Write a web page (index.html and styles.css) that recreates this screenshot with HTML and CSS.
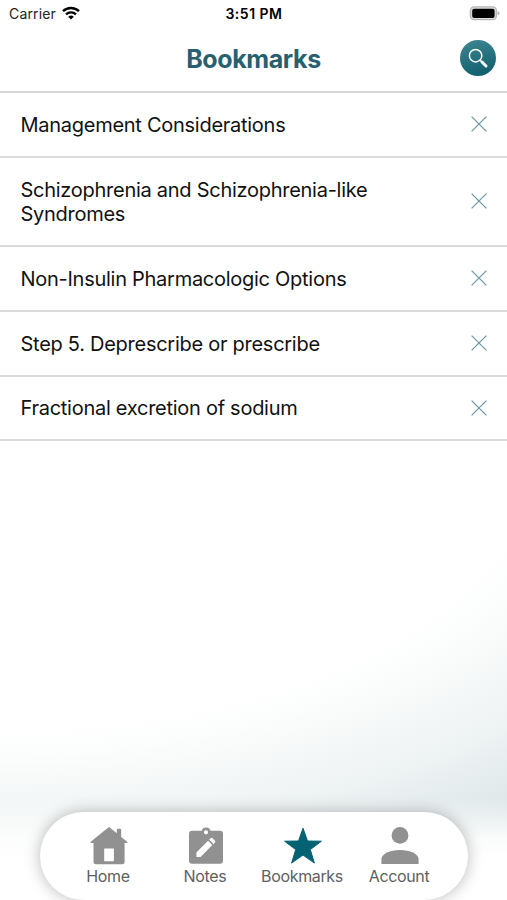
FILE: index.html
```html
<!DOCTYPE html>
<html lang="en">
<head>
    <title>Bookmarks</title>
    <meta charset="UTF-8">
    <link rel="stylesheet" href="styles.css">
</head>
<body>
    <div class="screen">
        <!-- status bar -->
        <div class="status-bar">
            <div class="carrier">
                <span>Carrier</span>
                <svg class="wifi" viewBox="0 0 18 14" width="18" height="14">
                    <path d="M1 5.2a11.6 11.6 0 0 1 16 0" fill="none" stroke="#000" stroke-width="2.5"/>
                    <path d="M4 8.4a7.2 7.2 0 0 1 10 0" fill="none" stroke="#000" stroke-width="2.3"/>
                    <path d="M6.2 10.8a4 4 0 0 1 5.6 0L9 13.6z"/>
                </svg>
            </div>
            <div class="time">3:51 PM</div>
            <div class="battery">
                <svg viewBox="0 0 31 15" width="31" height="15">
                    <rect x="1.4" y=".9" width="26" height="12.8" rx="3.8" fill="#ddd" stroke="#b5b5b5" stroke-width="1.3"/>
                    <rect x="3.2" y="2.7" width="22.4" height="9.2" rx="2"/>
                    <path d="M28.6 5v4.6q2-.6 2-2.3T28.6 5z" fill="#b5b5b5"/>
                </svg>
            </div>
        </div>

        <header class="header">
            <h1>Bookmarks</h1>
            <button class="search-btn" aria-label="Search">
                <svg viewBox="0 0 36 36" width="36" height="36">
                    <circle cx="15.6" cy="15.7" r="6.2" fill="none" stroke="#fff" stroke-width="1.5"/>
                    <path d="M20.2 20.2l2 2" stroke="#fff" stroke-width="1.5"/>
                    <path d="M22 22l4 4" stroke="#fff" stroke-width="3" stroke-linecap="round"/>
                </svg>
            </button>
        </header>

        <ul class="list">
            <li>
                <span>Management Considerations</span>
                <svg class="remove" viewBox="0 0 16 16"><path d="M.6.6l14.8 14.8M15.4.6L.6 15.4"/></svg>
            </li>
            <li>
                <span>Schizophrenia and Schizophrenia-like Syndromes</span>
                <svg class="remove" viewBox="0 0 16 16"><path d="M.6.6l14.8 14.8M15.4.6L.6 15.4"/></svg>
            </li>
            <li>
                <span>Non-Insulin Pharmacologic Options</span>
                <svg class="remove" viewBox="0 0 16 16"><path d="M.6.6l14.8 14.8M15.4.6L.6 15.4"/></svg>
            </li>
            <li>
                <span>Step 5. Deprescribe or prescribe</span>
                <svg class="remove" viewBox="0 0 16 16"><path d="M.6.6l14.8 14.8M15.4.6L.6 15.4"/></svg>
            </li>
            <li>
                <span>Fractional excretion of sodium</span>
                <svg class="remove" viewBox="0 0 16 16"><path d="M.6.6l14.8 14.8M15.4.6L.6 15.4"/></svg>
            </li>
        </ul>

        <!-- bottom tabs -->
        <nav class="tab-bar">
            <a class="tab">
                <svg viewBox="0 0 38 38" width="38" height="38">
                    <path fill-rule="evenodd" d="M18.3.4q.7-.6 1.4 0l7.1 5.9V2.7q0-1 1-1h2.4q1 0 1 1v7.2l6 4.9q.7 1-.4 1.2h-2.2v18.7q0 2.5-2.5 2.5H6q-2.5 0-2.5-2.5V16H1.1q-1.2-.3-.4-1.2zM14.2 21.5v12.8h9.7V21.5z"/>
                </svg>
                <span>Home</span>
            </a>
            <a class="tab">
                <svg viewBox="0 0 38 38" width="38" height="38">
                    <path fill-rule="evenodd" d="M5 3.7h9.7a4.6 4.6 0 0 1 8.8 0H33q3 0 3 3v27q0 3-3 3H5q-3 0-3-3v-27q0-3 3-3zM19 3.2a2.1 2.1 0 1 0 0 4.2 2.1 2.1 0 0 0 0-4.2z"/>
                    <path d="M9.4 29.9v-4.5L21 13.8l4.3 4.3-11.7 11.8zM22.2 12.6l1.4-1.4q1-.8 1.9 0l2.5 2.5q.8 1 0 1.9l-1.5 1.4z" fill="#fff"/>
                </svg>
                <span>Notes</span>
            </a>
            <a class="tab active">
                <svg viewBox="0 0 38 38" width="38" height="38">
                    <path d="M19 1.2l4.5 12.8 13.9.2-11.1 8.4 4.1 13.5L19 28 7.6 36.1l4.1-13.5L.6 14.2l13.9-.2z" stroke-width="1" stroke-linejoin="round"/>
                </svg>
                <span>Bookmarks</span>
            </a>
            <a class="tab">
                <svg viewBox="0 0 38 38" width="38" height="38">
                    <circle cx="19" cy="8.4" r="8.4"/>
                    <path d="M.4 36.9V32C.4 26.7 9 22.9 19 22.9s18.6 3.8 18.6 9.1v4.9z"/>
                </svg>
                <span>Account</span>
            </a>
        </nav>
    </div>
</body>
</html>
```

FILE: styles.css
```css
* {
    box-sizing: border-box;
}

body {
    margin: 0;
    padding: 0;
    overflow: hidden;
    background: #fff;
    font-family: Inter, "Liberation Sans", sans-serif;
    color: #111;
}

.screen {
    display: flex;
    flex-direction: column;
    height: 900px;
    background:
        linear-gradient(to bottom, rgba(255, 255, 255, 0) 798px, rgba(255, 255, 255, 0.85) 838px, #fff 858px),
        radial-gradient(ellipse 1120px 600px at 0 440px, #fff 48%, #fcfdfd 52%, #f4f7f7 60%, #edf2f3 66%, #dde6e8 77%);
}

/* status bar */
.status-bar {
    display: grid;
    grid-template-columns: 1fr auto 1fr;
    align-items: center;
    height: 27px;
    padding: 0 7px 0 9px;
    background: #fff;
    font-size: 14px;
    color: #000;
}

.carrier {
    display: flex;
    align-items: center;
    gap: 6px;
    letter-spacing: 0.15px;
    color: #222;
}

.wifi {
    margin-top: -2px;
}

.time {
    margin-right: 1px;
    font-weight: 600;
    letter-spacing: 0.5px;
}

.battery {
    display: flex;
    justify-content: flex-end;
}

/* header */
.header {
    display: grid;
    grid-template-columns: 36px 1fr 36px;
    align-items: center;
    height: 66px;
    padding: 0 11.5px 2px 11.5px;
    border-bottom: 2px solid #d9d9d9;
    background: #fff;
}

h1 {
    grid-column: 2;
    margin: 0;
    padding-top: 1px;
    text-align: center;
    font-size: 25px;
    font-weight: 700;
    letter-spacing: -0.4px;
    color: #28606f;
}

.search-btn {
    width: 36px;
    height: 36px;
    padding: 0;
    border: none;
    border-radius: 50%;
    background: linear-gradient(165deg, #3f8791, #0b5b6c);
}

.search-btn svg {
    display: block;
}

/* bookmarks */
.list {
    margin: 0;
    padding: 0;
    list-style: none;
}

.list li {
    display: flex;
    align-items: center;
    justify-content: space-between;
    height: 64.75px;
    padding: 0 20px 0 20.5px;
    border-bottom: 2px solid #dbdbdb;
    background: #fff;
    font-size: 20px;
    line-height: 24.5px;
    letter-spacing: -0.27px;
}

.list li:nth-child(2) {
    height: 89.25px;
}

.list span {
    width: 370px;
    padding-top: 1.5px;
}

.remove {
    width: 16px;
    height: 16px;
    stroke: #6d9ba6;
    stroke-width: 1.3;
    fill: none;
}

/* bottom tabs */
.tab-bar {
    display: grid;
    grid-template-columns: repeat(4, 97px);
    justify-content: center;
    width: 428px;
    height: 88px;
    margin: auto auto 0 40px;
    padding: 15px 0 0;
    border-radius: 44px;
    background: #fff;
    box-shadow: 0 0 16px rgba(0, 0, 0, 0.28);
}

.tab {
    display: flex;
    flex-direction: column;
    align-items: center;
    gap: 1px;
    font-size: 16px;
    line-height: 20px;
    letter-spacing: -0.35px;
    color: #606060;
}

.tab svg {
    fill: #919191;
}

.tab span {
    margin-left: -1px;
}

.tab.active svg {
    fill: #036272;
    stroke: #036272;
}
```
